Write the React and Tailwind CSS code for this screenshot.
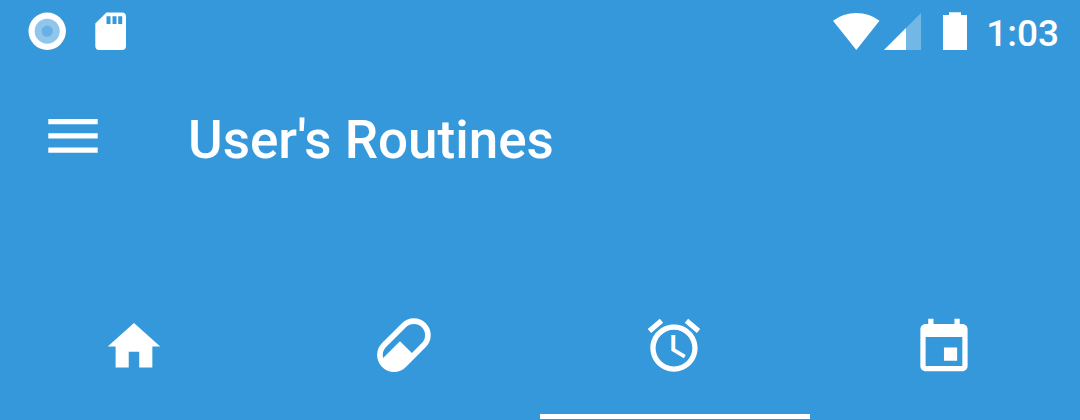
import React from "react";

const tabs = [
  { name: "Home", viewBox: "0.2 0 24 24", d: "M10 20v-6h4v6h5v-8h3L12 3 2 12h3v8z" },
  {
    name: "Medicines",
    viewBox: "1 1.3 22.4 22.4",
    d: "M4.22,11.29L11.29,4.22C13.64,1.88 17.43,1.88 19.78,4.22C22.12,6.56 22.12,10.36 19.78,12.71L12.71,19.78C10.36,22.12 6.56,22.12 4.22,19.78C1.88,17.43 1.88,13.64 4.22,11.29M5.64,12.71C4.59,13.75 4.24,15.24 4.6,16.57L10.59,10.59L14.83,14.83L18.36,11.29C19.93,9.73 19.93,7.2 18.36,5.64C16.8,4.07 14.27,4.07 12.71,5.64L5.64,12.71Z",
  },
  {
    name: "Routines",
    viewBox: "0.2 0.4 24 24",
    d: "M22 5.72l-4.6-3.86-1.29 1.53 4.6 3.86L22 5.72zM7.88 3.39L6.6 1.86 2 5.71l1.29 1.53 4.59-3.85zM12.5 8H11v6l4.75 2.85.75-1.23-4-2.37V8zM12 4c-4.97 0-9 4.03-9 9s4.02 9 9 9c4.97 0 9-4.03 9-9s-4.03-9-9-9zm0 16c-3.87 0-7-3.13-7-7s3.13-7 7-7 7 3.13 7 7-3.13 7-7 7z",
  },
  {
    name: "Calendar",
    viewBox: "0.2 -0.4 24 24",
    d: "M17 12h-5v5h5v-5zM16 1v2H8V1H6v2H5c-1.11 0-1.99.9-1.99 2L3 19c0 1.1.89 2 2 2h14c1.1 0 2-.9 2-2V5c0-1.1-.9-2-2-2h-1V1h-2zm3 18H5V8h14v11z",
  },
];

function StatusBar() {
  return (
    <div className="flex h-[62px] items-center justify-between pr-[21px] pl-7">
      <div className="flex items-center gap-7">
        <svg className="size-[38px]" viewBox="0 0 38 38" aria-hidden="true">
          <circle cx="19.200" cy="19.200" r="18.700" fill="#fff" />
          <circle cx="19.200" cy="19.200" r="12.500" fill="#90c5ec" />
          <circle cx="19.200" cy="19.200" r="5.600" fill="#69b1e5" />
        </svg>
        <svg className="h-[38px] w-8" viewBox="0 0 32 38" aria-hidden="true">
          <path
            fill="#fff"
            fillRule="evenodd"
            d="M12.400.5H28a4 4 0 0 1 4 4V34a4 4 0 0 1-4 4H5.300a4 4 0 0 1-4-4V11.400zM12.500 4.300v7.700h4V4.300zM18.500 4.300v7.700h4V4.300zM24.200 4.300v7.700h4V4.300z"
          />
        </svg>
      </div>
      <div className="flex items-center">
        <svg className="h-[38px] w-[47px]" viewBox="0 0 47 38" aria-hidden="true">
          <path fill="#fff" d="M0 8.800Q10 1 23.300 1T46.500 8.800L23.300 38z" />
        </svg>
        <svg className="ml-1 h-[38px] w-[38px]" viewBox="0 0 38 38" aria-hidden="true">
          <path fill="#fff" fillOpacity=".3" d="M37 1V38H0z" />
          <path fill="#fff" d="M22 16V38H0z" />
        </svg>
        <svg className="ml-[21px] h-[38px] w-6" viewBox="0 0 24 38" aria-hidden="true">
          <path fill="#fff" d="M6 .3h12V3h6v35H0V3h6z" />
        </svg>
        <time className="ml-[19px] pt-1.5 text-[37px] leading-8 font-medium">1:03</time>
      </div>
    </div>
  );
}

export default function App() {
  return (
    <header className="bg-[#3598db] pb-px font-['Roboto',sans-serif] text-white">
      <StatusBar />
      <div className="flex h-[148px] items-center gap-[90px] pl-12">
        <button type="button" aria-label="Open navigation menu">
          <svg className="h-[34px] w-[50px]" viewBox="0 0 50 34" aria-hidden="true">
            <path fill="#fff" d="M.3 0h49.400v5.200H.3zM.3 14.300h49.400v5.200H.3zM.3 28.600h49.400v5.200H.3z" />
          </svg>
        </button>
        <h1 className="pt-2 text-[53px] leading-[60px] font-medium">User's Routines</h1>
      </div>
      <nav className="grid grid-cols-4 pt-[70px]" aria-label="Sections">
        {tabs.map((tab) => (
          <button
            key={tab.name}
            type="button"
            aria-label={tab.name}
            aria-current={tab.name === "Routines" ? "page" : undefined}
            className="flex h-[139px] justify-center border-b-5 border-transparent pt-[35px] pr-px aria-[current=page]:border-white"
          >
            <svg className="size-[63px]" viewBox={tab.viewBox} fill="currentColor" aria-hidden="true">
              <path d={tab.d} />
            </svg>
          </button>
        ))}
      </nav>
    </header>
  );
}
